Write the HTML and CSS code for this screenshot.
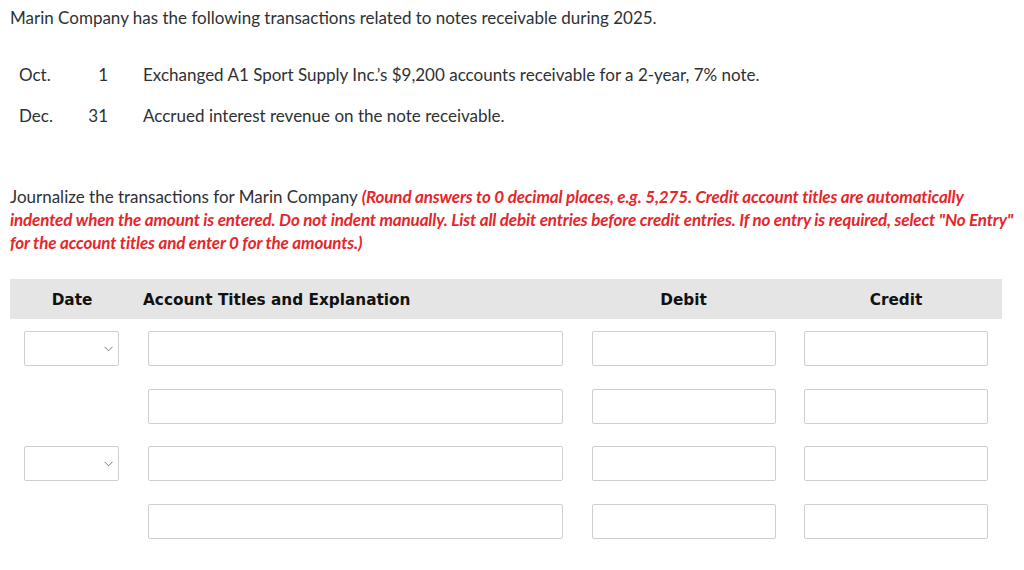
FILE: index.html
```html
<!DOCTYPE html>
<html>
<head>
<meta charset="utf-8">
<link rel="stylesheet" href="styles.css">
</head>
<body>
<p class="intro">Marin Company has the following transactions related to notes receivable during 2025.</p>
<div class="tx">
  <div class="m">Oct.</div><div class="d">1</div><div class="desc">Exchanged A1 Sport Supply Inc.’s $9,200 accounts receivable for a 2-year, 7% note.</div>
  <div class="m">Dec.</div><div class="d">31</div><div class="desc">Accrued interest revenue on the note receivable.</div>
</div>
<p class="instr">Journalize the transactions for Marin Company <em>(Round answers to 0 decimal places, e.g. 5,275. Credit account titles are automatically indented when the amount is entered. Do not indent manually. List all debit entries before credit entries. If no entry is required, select "No Entry" for the account titles and enter 0 for the amounts.)</em></p>
<div class="journal">
  <div class="head">
    <div class="h c-date">Date</div>
    <div class="h c-acct">Account Titles and Explanation</div>
    <div class="h c-amt">Debit</div>
    <div class="h c-amt">Credit</div>
  </div>
  <div class="rows">
    <div class="cell c-date"><div class="sel"><svg width="9" height="6" viewBox="0 0 9 6"><path d="M0.5 0.8 L4.5 4.8 L8.5 0.8" fill="none" stroke="#777" stroke-width="1"/></svg></div></div>
    <div class="cell c-acct"><div class="inp"></div></div>
    <div class="cell c-debit"><div class="inp"></div></div>
    <div class="cell c-credit"><div class="inp"></div></div>

    <div class="cell c-date"></div>
    <div class="cell c-acct"><div class="inp"></div></div>
    <div class="cell c-debit"><div class="inp"></div></div>
    <div class="cell c-credit"><div class="inp"></div></div>

    <div class="cell c-date"><div class="sel"><svg width="9" height="6" viewBox="0 0 9 6"><path d="M0.5 0.8 L4.5 4.8 L8.5 0.8" fill="none" stroke="#777" stroke-width="1"/></svg></div></div>
    <div class="cell c-acct"><div class="inp"></div></div>
    <div class="cell c-debit"><div class="inp"></div></div>
    <div class="cell c-credit"><div class="inp"></div></div>

    <div class="cell c-date"></div>
    <div class="cell c-acct"><div class="inp"></div></div>
    <div class="cell c-debit"><div class="inp"></div></div>
    <div class="cell c-credit"><div class="inp"></div></div>
  </div>
</div>
</body>
</html>
```
FILE: styles.css
```css
html, body { margin: 0; padding: 0; background: #fff; }
body {
  padding: 0 0 0 10px;
  font-family: Lato, "Liberation Sans", sans-serif;
  font-size: 17px;
  color: #2d3135;
}
.intro { margin: 0; padding-top: 8px; line-height: 20px; }
.tx {
  display: grid;
  grid-template-columns: 62px 36px auto;
  grid-auto-rows: 41px;
  align-items: center;
  margin-top: 26px;
  line-height: 20px;
}
.tx .m { padding-left: 9px; }
.tx .d { text-align: right; }
.tx .desc { padding-left: 35px; }
.instr { margin: 49px 0 0 0; line-height: 23px; }
.instr em { color: #e5262b; font-weight: 700; font-style: italic; letter-spacing: -0.14px; }
.journal { margin-top: 25px; width: 992px; }
.head, .rows {
  display: grid;
  grid-template-columns: 124px 443px 213px 212px;
}
.head { background: #e5e5e5; height: 40px; align-items: center; }
.h {
  font-family: "DejaVu Sans", Verdana, sans-serif;
  font-size: 15.3px;
  font-weight: 700;
  color: #111;
  text-align: center;
  padding-top: 1px;
}
.h.c-acct { text-align: left; padding-left: 9px; }
.rows { padding-top: 12px; row-gap: 22.5px; }
.cell { padding: 0 14px; height: 35px; }
.cell.c-debit { padding-left: 15px; }
.inp, .sel {
  height: 35px;
  box-sizing: border-box;
  border: 1px solid #cfcfcf;
  border-radius: 2px;
  background: #fff;
}
.sel { width: 95px; display: flex; align-items: center; justify-content: flex-end; padding-right: 5px; }
.sel svg { display: block; margin-top: 1px; }
```
